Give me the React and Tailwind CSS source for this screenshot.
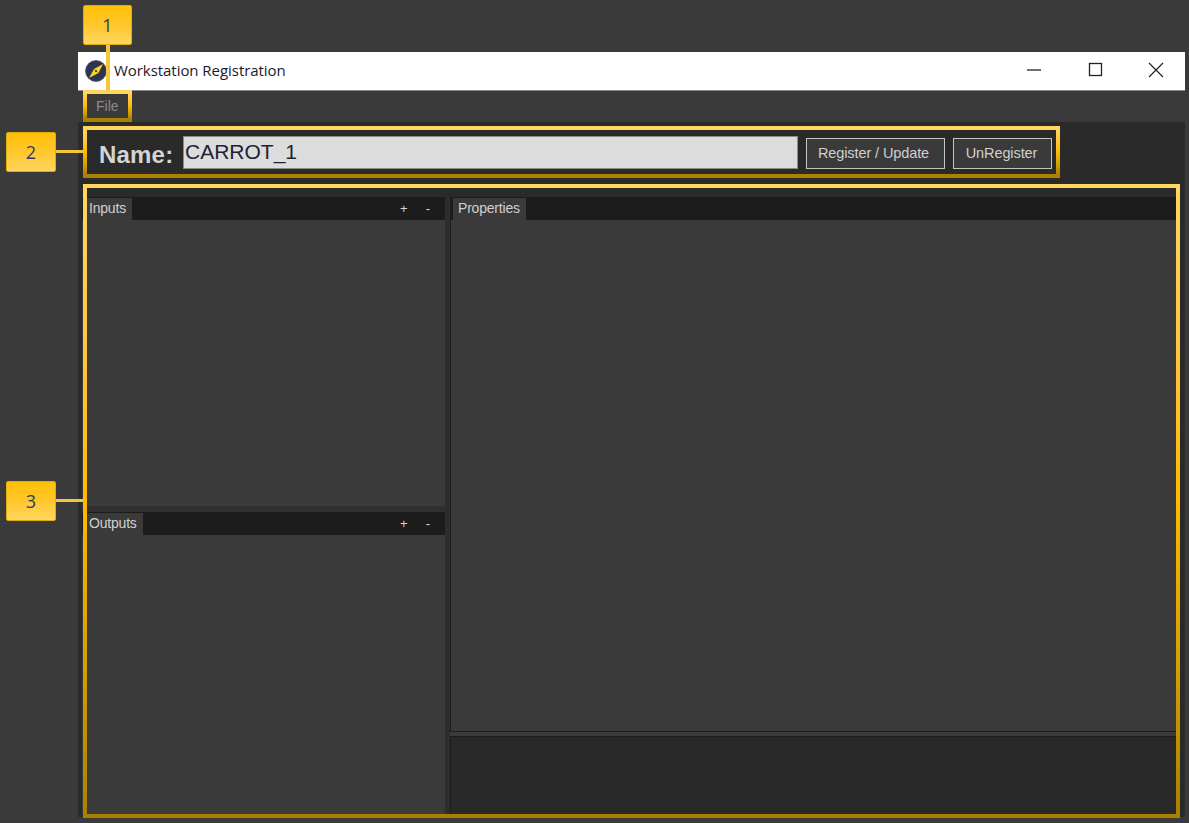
import React from "react";

const ui = "font-['Liberation_Sans',Arial,sans-serif]";

function Callout({ n, className }) {
  return (
    <div
      className={`absolute z-20 h-[40px] rounded-[2px] border border-[#e0ac10] bg-gradient-to-b from-[#ffc000] via-[#ffc72a] to-[#ffd65c] flex items-center justify-center text-[18px] text-[#2f3a66] font-['Open_Sans',sans-serif] ${className}`}
    >
      {n}
    </div>
  );
}

function Frame({ className }) {
  return (
    <div
      className={`absolute z-10 pointer-events-none border-[4px] border-solid [border-image:linear-gradient(to_bottom,#ffd75e_0%,#ffc640_25%,#ffb900_50%,#cf9e00_78%,#a98000_100%)_1] ${className}`}
    />
  );
}

function TabStrip({ label, tabW, controls, tabClass = "" }) {
  return (
    <div className="h-[23px] shrink-0 bg-[#1c1c1c] flex items-end justify-between">
      <div
        className={`ml-[2px] h-[22px] bg-[#3a3a3a] text-[14px] tracking-[-0.2px] text-[#d0d0d0] pl-[5px] ${tabClass} ${tabW}`}
      >
        {label}
      </div>
      {controls && (
        <div className="h-full flex items-center text-[13px] text-[#d6d6d6] pr-[15px] gap-[18px]">
          <span>+</span>
          <span>-</span>
        </div>
      )}
    </div>
  );
}

function Compass() {
  return (
    <svg width="22" height="22" viewBox="0 0 22 22" className="shrink-0">
      <circle cx="11" cy="11" r="10.5" fill="#2e3350" stroke="#555a70" strokeWidth="0.8" />
      <path d="M18 4 L13.5 13 L9 9 Z" fill="#ffd21e" />
      <path d="M4 18 L9 9 L13.5 13 Z" fill="#f2d91e" />
      <circle cx="11" cy="11" r="1.1" fill="#2e3350" />
    </svg>
  );
}

export default function App() {
  return (
    <div className={`relative w-[1189px] h-[823px] overflow-hidden bg-[#3a3a3a] ${ui}`}>
      <Callout n="1" className="left-[83px] top-[5px] w-[49px]" />
      <Callout n="2" className="left-[6px] top-[132px] w-[50px]" />
      <Callout n="3" className="left-[6px] top-[481px] w-[50px]" />
      <div className="absolute z-10 left-[106px] top-[45px] w-[4px] h-[46px] bg-[#f5c63c]" />
      <div className="absolute z-10 left-[56px] top-[150px] w-[27px] h-[3px] bg-[#f5c63c]" />
      <div className="absolute z-10 left-[56px] top-[499px] w-[27px] h-[3px] bg-[#f5c63c]" />
      <Frame className="left-[83px] top-[90px] w-[49px] h-[32px]" />
      <Frame className="left-[83px] top-[126px] w-[977px] h-[52px]" />
      <Frame className="left-[83px] top-[184px] w-[1097px] h-[634px]" />

      <div className="pl-[78px] pr-[4px] pt-[52px] h-[817px] flex flex-col">
        <div className="h-[39px] shrink-0 bg-white border-b border-[#8a8a8a] flex items-center pl-[7px]">
          <Compass />
          <span className="ml-[7px] text-[15px] text-[#1a1a2a] font-['Open_Sans',sans-serif] tracking-[-0.05px] mt-[-1px]">
            Workstation Registration
          </span>
          <div className="ml-auto flex items-center h-full mt-[-2px]">
            <svg width="62" height="16" viewBox="0 0 62 16">
              <path d="M24 8 H38" stroke="#222" strokeWidth="1.3" />
            </svg>
            <svg width="61" height="16" viewBox="0 0 61 16">
              <rect x="24.5" y="1.5" width="12" height="12" fill="none" stroke="#222" strokeWidth="1.3" />
            </svg>
            <svg width="59" height="16" viewBox="0 0 59 16">
              <path d="M23 1 L37 15 M37 1 L23 15" stroke="#222" strokeWidth="1.2" />
            </svg>
          </div>
        </div>
        <div className="h-[31px] shrink-0 flex items-center pl-[18px] text-[14px] text-[#8a8a8a]">File</div>
        <div className="flex-1 min-h-0 bg-[#2a2a2a] flex flex-col">
          <div className="h-[61px] shrink-0 flex items-center">
            <span className="ml-[21px] text-[24px] font-bold text-[#d4d4d4] tracking-[0.2px] w-[84px] mt-[4px]">Name:</span>
            <div className="w-[615px] h-[33px] bg-[#dcdcdc] border border-[#8c8c8c] text-[21px] leading-[30px] text-[#1c2433] pl-[1px] mt-[-1px]">
              CARROT_1
            </div>
            <button className="ml-[8px] w-[139px] h-[31px] mt-[2px] pt-[1px] pr-[4px] bg-[#3a3a3a] border border-[#c4c4c4] text-[14.5px] tracking-[-0.1px] text-[#cfcfcf]">
              Register / Update
            </button>
            <button className="ml-[8px] w-[99px] h-[31px] mt-[2px] pt-[1px] pr-[2px] bg-[#3a3a3a] border border-[#c4c4c4] text-[14.5px] tracking-[-0.1px] text-[#cfcfcf]">
              UnRegister
            </button>
          </div>
          <div className="flex-1 min-h-0 flex pl-[4px] pr-[7px] pt-[14px] pb-[3px]">
            <div className="w-[363px] shrink-0 flex flex-col">
              <div className="h-[309px] shrink-0 flex flex-col bg-[#3a3a3a]">
                <TabStrip label="Inputs" tabW="w-[48px]" controls />
                <div className="flex-1" />
              </div>
              <div className="h-[6px] shrink-0 bg-[#303030]" />
              <div className="flex-1 min-h-0 flex flex-col bg-[#3a3a3a]">
                <TabStrip label="Outputs" tabW="w-[59px]" controls tabClass="pl-[4px]" />
                <div className="flex-1" />
              </div>
            </div>
            <div className="w-[5px] shrink-0 bg-[#2d2d2d]" />
            <div className="flex-1 min-w-0 flex flex-col">
              <div className="h-[535px] shrink-0 flex flex-col bg-[#3a3a3a] border-b border-l border-[#1e1e1e]">
                <TabStrip label="Properties" tabW="w-[73px]" />
                <div className="flex-1" />
              </div>
              <div className="h-[4px] shrink-0 bg-[#3a3a3a]" />
              <div className="flex-1 min-h-0 bg-[#292929] border-t border-l border-[#1c1c1c]" />
            </div>
          </div>
        </div>
      </div>
    </div>
  );
}
